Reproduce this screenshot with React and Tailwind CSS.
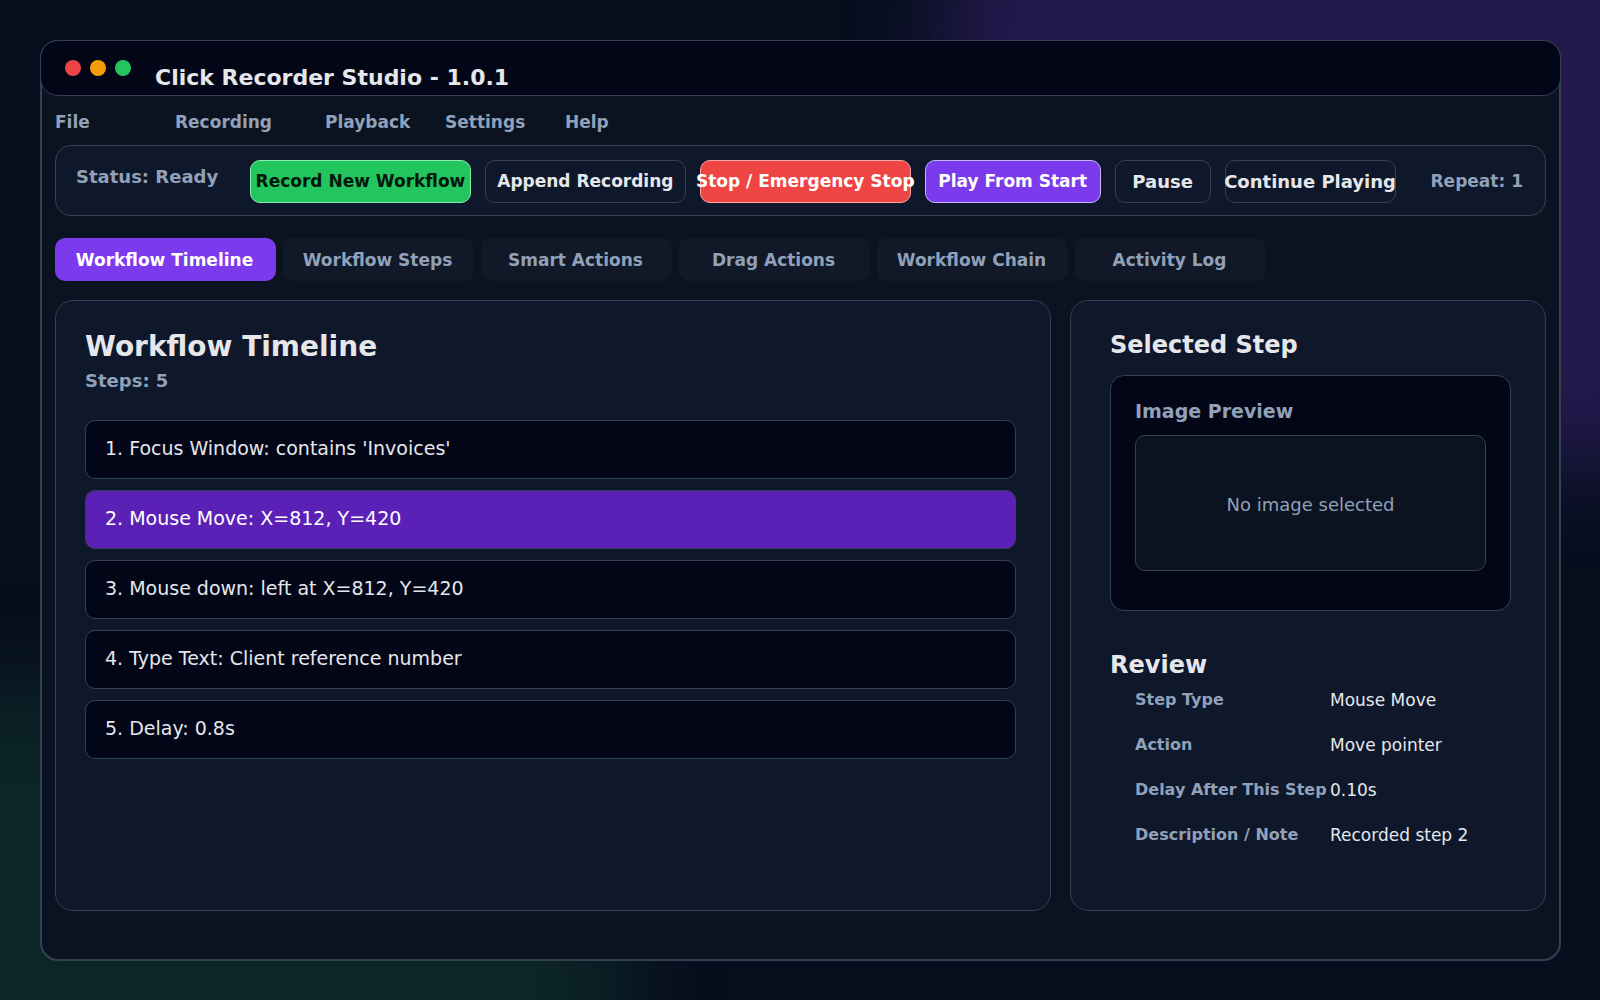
const menus = [
  ['File', 'w-[120px]'],
  ['Recording', 'w-[150px]'],
  ['Playback', 'w-[120px]'],
  ['Settings', 'w-[120px]'],
  ['Help', 'w-[120px]'],
];

const actions = [
  ['Record New Workflow', 'text-[17px] bg-[#22c55e] border-[#86efac] text-[#03180b]'],
  ['Append Recording', 'text-[17px] border-[#334155] text-gray-200'],
  ['Stop / Emergency Stop', 'text-[17px] bg-[#ef4444] border-[#fca5a5] text-white'],
  ['Play From Start', 'text-[17px] bg-[#7c3aed] border-[#c4b5fd] text-white'],
  ['Pause', 'text-[18px] border-[#334155] text-gray-200'],
  ['Continue Playing', 'text-[18px] border-[#334155] text-gray-200'],
];

const tabs = ['Workflow Timeline', 'Workflow Steps', 'Smart Actions', 'Drag Actions', 'Workflow Chain', 'Activity Log'];

const steps = [
  "1. Focus Window: contains 'Invoices'",
  '2. Mouse Move: X=812, Y=420',
  '3. Mouse down: left at X=812, Y=420',
  '4. Type Text: Client reference number',
  '5. Delay: 0.8s',
];

const review = [
  ['Step Type', 'Mouse Move'],
  ['Action', 'Move pointer'],
  ['Delay After This Step', '0.10s'],
  ['Description / Note', 'Recorded step 2'],
];

function TitleBar() {
  return (
    <header className="-mx-[2px] -mt-[2px] flex h-14 items-start rounded-[18px] border border-[#334155] bg-[#020617] pl-6">
      <div className="flex gap-[9px] pt-[19px]">
        <span className="size-4 rounded-full bg-[#ef4444]" />
        <span className="size-4 rounded-full bg-[#f59e0b]" />
        <span className="size-4 rounded-full bg-[#22c55e]" />
      </div>
      <h1 className="pt-[23px] pl-6 text-[22px] leading-7 font-bold whitespace-nowrap text-gray-200">Click Recorder Studio - 1.0.1</h1>
    </header>
  );
}

function Toolbar() {
  return (
    <section className="flex h-[71px] items-start rounded-2xl border border-[#334155] bg-[#0f172a] pt-[14px] pr-[22px] pl-5 whitespace-nowrap">
      <p className="w-[174px] shrink-0 pt-[5px] text-[18px] leading-6 font-bold text-slate-400">Status: Ready</p>
      <div className="grid min-w-0 flex-1 grid-cols-[minmax(0,221fr)_minmax(0,201fr)_minmax(0,211fr)_minmax(0,176fr)_minmax(0,96fr)_minmax(0,171fr)] gap-[14px]">
        {actions.map(([label, tone]) => (
          <button key={label} className={`flex h-[43px] items-center justify-center rounded-[10px] border font-bold ${tone}`}>
            {label}
          </button>
        ))}
      </div>
      <p className="pt-[10px] pl-[35px] text-[17px] leading-[22px] font-bold text-slate-400">Repeat: 1</p>
    </section>
  );
}

function Timeline() {
  return (
    <section className="rounded-[18px] border border-[#334155] bg-[#0f172a] pt-[28px] pr-[34px] pl-[29px]">
      <h2 className="text-[28px] leading-9 font-bold text-gray-200">Workflow Timeline</h2>
      <p className="pt-[4px] text-[18px] leading-6 font-bold text-slate-400">Steps: 5</p>
      <ol className="mt-[27px] flex flex-col gap-[11px]">
        {steps.map((step, i) => (
          <li key={step}>
            <button
              className={`flex h-[59px] w-full items-center rounded-[10px] border border-[#334155] px-[19px] pb-[3px] text-left text-[19px] ${
                i === 1 ? 'bg-[#5b21b6] text-white' : 'bg-[#020617] text-gray-200'
              }`}
            >
              {step}
            </button>
          </li>
        ))}
      </ol>
    </section>
  );
}

function SelectedStep() {
  return (
    <aside className="rounded-[18px] border border-[#334155] bg-[#0f172a] pt-[28px] pr-[34px] pl-[39px]">
      <h2 className="text-[24px] leading-8 font-bold text-gray-200">Selected Step</h2>
      <div className="mt-[14px] rounded-[14px] border border-[#334155] bg-[#020617] px-6 pt-[23px] pb-[39px]">
        <h3 className="text-[19px] leading-6 font-bold text-slate-400">Image Preview</h3>
        <div className="mt-3 flex h-[136px] items-center justify-center rounded-[10px] border border-[#334155] bg-[#0b1220] pt-[2px] text-[18px] text-slate-400">
          No image selected
        </div>
      </div>
      <h2 className="mt-[38px] text-[24px] leading-8 font-bold text-gray-200">Review</h2>
      <dl className="grid grid-cols-[195px_1fr] gap-y-[21px] pt-[7px] pl-[25px] whitespace-nowrap">
        {review.map(([name, value]) => (
          <div key={name} className="contents">
            <dt className="text-[16px] leading-6 font-bold text-slate-400">{name}</dt>
            <dd className="text-[17px] leading-6 text-gray-200">{value}</dd>
          </div>
        ))}
      </dl>
    </aside>
  );
}

export default function App() {
  return (
    <div className="relative isolate flex min-h-screen overflow-hidden bg-[#070e1e] pt-10 pr-[39px] pb-[39px] pl-10 font-['DejaVu_Sans',sans-serif]">
      <div className="absolute -top-[330px] -right-[340px] -z-10 h-[800px] w-[1000px] rounded-full bg-[#23194c] blur-[44px]" />
      <div className="absolute -bottom-[310px] -left-[365px] -z-10 h-[620px] w-[990px] rounded-full bg-[#0c2526] blur-[44px]" />
      <main className="flex min-w-0 flex-1 flex-col rounded-[18px] border-2 border-[#334155] bg-[#0b1220]">
        <TitleBar />
        <div className="flex flex-1 flex-col px-[13px] pb-[48px]">
          <nav className="flex pt-[14px] pb-[11px] text-[17px] leading-6 font-bold text-slate-400">
            {menus.map(([label, width]) => (
              <button key={label} className={`text-left ${width}`}>{label}</button>
            ))}
          </nav>
          <Toolbar />
          <div role="tablist" className="flex gap-[7px] pt-[22px] pb-[19px] whitespace-nowrap">
            {tabs.map((tab, i) => (
              <button
                key={tab}
                role="tab"
                aria-selected={i === 0}
                className={`h-[43px] rounded-[10px] pt-[2px] pr-[2px] text-[17px] font-bold ${
                  i === 0 ? 'w-[221px] bg-[#7c3aed] text-white' : 'w-[191px] bg-[#111827] text-slate-400'
                }`}
              >
                {tab}
              </button>
            ))}
          </div>
          <div className="grid flex-1 grid-cols-[minmax(0,996fr)_minmax(0,476fr)] gap-[19px]">
            <Timeline />
            <SelectedStep />
          </div>
        </div>
      </main>
    </div>
  );
}
